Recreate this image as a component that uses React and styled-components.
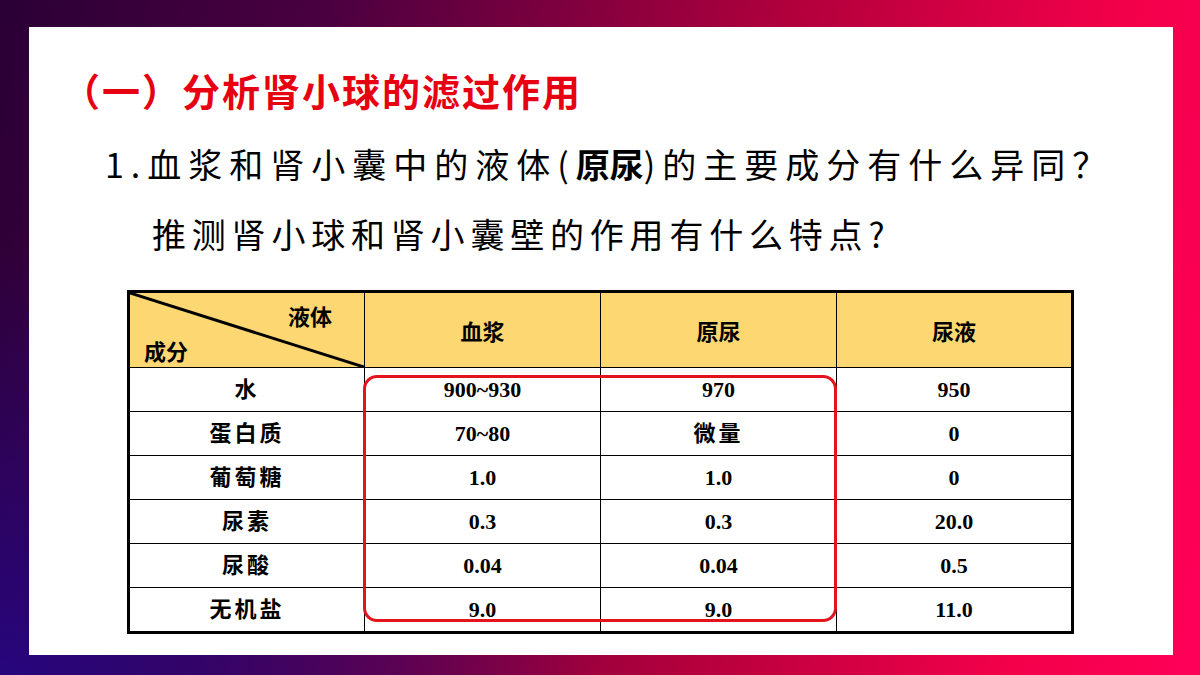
import React from "react";
import styled, { createGlobalStyle } from "styled-components";

const GlobalStyle = createGlobalStyle`
  html, body { margin: 0; padding: 0; }
  body { font-family: "Noto Sans CJK SC", "Noto Sans", sans-serif; }
`;

const Frame = styled.div`
  width: 1200px;
  height: 675px;
  box-sizing: border-box;
  padding: 27px 27px 20px 29px;
  background:
    radial-gradient(ellipse 70% 90% at 0% 100%, rgba(38, 6, 128, 0.95), rgba(38, 6, 128, 0) 70%),
    linear-gradient(100deg, #2a0036 0%, #4a0040 25%, #b0003c 60%, #f2004a 85%, #ff0058 100%);
  display: flex;
`;

const Panel = styled.div`
  flex: 1;
  background: #ffffff;
  display: flex;
  flex-direction: column;
`;

const Title = styled.h1`
  margin: 41px 0 0 33px;
  font-family: "Noto Sans CJK SC", sans-serif;
  font-weight: 700;
  font-size: 38px;
  line-height: 44px;
  letter-spacing: 2px;
  color: #e60012;
`;

const Question = styled.p`
  margin: ${(p) => p.$top}px 0 0 ${(p) => p.$left}px;
  font-family: "Noto Sans CJK SC", sans-serif;
  font-weight: 400;
  font-size: 34px;
  line-height: 44px;
  letter-spacing: ${(p) => p.$spacing}px;
  color: #000;
  white-space: nowrap;
`;

const Strong = styled.b`
  font-weight: 700;
  letter-spacing: 0;
`;

const TableWrap = styled.div`
  position: relative;
  margin: 34px 0 0 98px;
  width: 947px;
`;

const Table = styled.table`
  width: 947px;
  border-collapse: collapse;
  border: 3px solid #000;
  table-layout: fixed;
`;

const HeadCell = styled.th`
  height: 74px;
  padding: 0;
  background: #fcd772;
  border: 1.5px solid #000;
  font-family: "Noto Sans CJK SC", sans-serif;
  font-weight: 700;
  font-size: 22px;
  color: #000;
  text-align: center;
  vertical-align: middle;
  position: relative;
`;

const Corner = styled.div`
  height: 74px;
  box-sizing: border-box;
  display: flex;
  flex-direction: column;
  justify-content: space-between;
  padding: 9px 32px 4px 14px;
  line-height: 26px;
  position: relative;
  z-index: 1;
`;

const CornerTop = styled.span`
  align-self: flex-end;
`;

const CornerBottom = styled.span`
  align-self: flex-start;
`;

const Diagonal = styled.svg`
  position: absolute;
  inset: 0;
  width: 100%;
  height: 100%;
`;

const Cell = styled.td`
  height: 43px;
  padding: 0;
  border: 1.5px solid #000;
  text-align: center;
  vertical-align: middle;
  font-family: "Liberation Serif", "Noto Sans CJK SC", serif;
  font-weight: 700;
  font-size: 22px;
  letter-spacing: ${(p) => (p.$cjk ? "3px" : "0")};
  color: #000;
  line-height: 1;
`;

const Highlight = styled.div`
  position: absolute;
  left: 236px;
  top: 85px;
  width: 474px;
  height: 247px;
  box-sizing: border-box;
  border: 3px solid #e3141b;
  border-radius: 14px;
  pointer-events: none;
`;

const rows = [
  ["水", "900~930", "970", "950"],
  ["蛋白质", "70~80", "微量", "0"],
  ["葡萄糖", "1.0", "1.0", "0"],
  ["尿素", "0.3", "0.3", "20.0"],
  ["尿酸", "0.04", "0.04", "0.5"],
  ["无机盐", "9.0", "9.0", "11.0"],
];

const isCjk = (s) => /[\u4e00-\u9fff]/.test(s);

export default function App() {
  return (
    <>
      <GlobalStyle />
      <Frame>
        <Panel>
          <Title>（一）分析肾小球的滤过作用</Title>
          <Question $top={30} $left={76} $spacing={7}>
            1.血浆和肾小囊中的液体(<Strong>原尿</Strong>)的主要成分有什么异同？
          </Question>
          <Question $top={26} $left={123} $spacing={5.8}>
            推测肾小球和肾小囊壁的作用有什么特点?
          </Question>
          <TableWrap>
            <Table>
              <thead>
                <tr>
                  <HeadCell>
                    <Diagonal viewBox="0 0 100 100" preserveAspectRatio="none">
                      <line x1="0" y1="0" x2="100" y2="100" stroke="#000" strokeWidth="3" vectorEffect="non-scaling-stroke" />
                    </Diagonal>
                    <Corner>
                      <CornerTop>液体</CornerTop>
                      <CornerBottom>成分</CornerBottom>
                    </Corner>
                  </HeadCell>
                  <HeadCell>血浆</HeadCell>
                  <HeadCell>原尿</HeadCell>
                  <HeadCell>尿液</HeadCell>
                </tr>
              </thead>
              <tbody>
                {rows.map((r) => (
                  <tr key={r[0]}>
                    {r.map((c, i) => (
                      <Cell key={i} $cjk={isCjk(c)}>{c}</Cell>
                    ))}
                  </tr>
                ))}
              </tbody>
            </Table>
            <Highlight />
          </TableWrap>
        </Panel>
      </Frame>
    </>
  );
}
